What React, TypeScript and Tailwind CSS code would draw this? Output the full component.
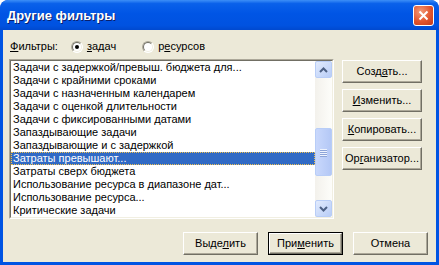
import React from "react";

const items = [
  "Задачи с задержкой/превыш. бюджета для...",
  "Задачи с крайними сроками",
  "Задачи с назначенным календарем",
  "Задачи с оценкой длительности",
  "Задачи с фиксированными датами",
  "Запаздывающие задачи",
  "Запаздывающие и с задержкой",
  "Затраты превышают...",
  "Затраты сверх бюджета",
  "Использование ресурса в диапазоне дат...",
  "Использование ресурса...",
  "Критические задачи",
];

const font = "font-['Liberation_Sans',Arial,sans-serif]";

function Btn({
  children,
  def,
  w = "w-[75px]",
}: {
  children: React.ReactNode;
  def?: boolean;
  w?: string;
}) {
  return (
    <div
      className={`${w} h-[23px] ${def ? "border border-black" : ""} bg-[#ece9d8]`}
    >
      <div
        className={`w-full h-full flex items-center justify-center border border-t-white border-l-white border-r-[#716f64] border-b-[#716f64] shadow-[inset_-1px_-1px_0_#aca899] text-[11px] text-black`}
      >
        {children}
      </div>
    </div>
  );
}

function Radio({ on }: { on?: boolean }) {
  return (
    <span className="w-[12px] h-[12px] rounded-full bg-white border border-t-[#aca899] border-l-[#aca899] border-r-white border-b-white flex items-center justify-center">
      <span className="w-[10px] h-[10px] rounded-full border border-t-[#716f64] border-l-[#716f64] border-r-[#f1efe2] border-b-[#f1efe2] flex items-center justify-center">
        {on && <span className="w-[4px] h-[4px] rounded-full bg-black" />}
      </span>
    </span>
  );
}

function Arrow({ up }: { up?: boolean }) {
  return (
    <div className="w-[17px] h-[17px] rounded-[2px] border border-[#b8cdf7] bg-gradient-to-br from-[#e2ebfd] to-[#b8cdf7] flex items-center justify-center">
      <svg width="9" height="6" viewBox="0 0 9 6">
        <path
          d={up ? "M1 5 L4.5 1.5 L8 5" : "M1 1 L4.5 4.5 L8 1"}
          fill="none"
          stroke="#4d6185"
          strokeWidth="2"
        />
      </svg>
    </div>
  );
}

export default function App() {
  return (
    <div className={`w-[439px] h-[265px] ${font} bg-[#0054e3] rounded-t-[8px] flex flex-col overflow-hidden`}>
      <div className="h-[30px] shrink-0 flex items-center justify-between pl-[7px] pr-[5px] rounded-t-[8px] bg-[linear-gradient(#3d8ff7_0%,#0a61ea_12%,#0055e5_45%,#0052e0_85%,#0049cf_100%)]">
        <span className="text-white font-bold text-[13px] [text-shadow:1px_1px_#0a1e6a] pt-[1px]">
          Другие фильтры
        </span>
        <div className="w-[21px] h-[21px] rounded-[3px] border border-white bg-[radial-gradient(circle_at_35%_30%,#f29a78,#e2552e_55%,#c2391a)] flex items-center justify-center">
          <svg width="11" height="11" viewBox="0 0 11 11">
            <path d="M1.5 1.5 L9.5 9.5 M9.5 1.5 L1.5 9.5" stroke="white" strokeWidth="2" />
          </svg>
        </div>
      </div>

      <div className="flex-1 mx-[3px] mb-[3px] bg-[#ece9d8] flex flex-col text-[11px] text-black">
        <div className="h-[13px] mt-[10px] flex items-center pl-[7px]">
          <span>
            <span className="underline">Ф</span>ильтры:
          </span>
          <span className="ml-[13px]"><Radio on /></span>
          <span className="ml-[4px]">
            <span className="underline">з</span>адач
          </span>
          <span className="ml-[26px]"><Radio /></span>
          <span className="ml-[4px]">
            р<span className="underline">е</span>сурсов
          </span>
        </div>

        <div className="flex mt-[6px] pl-[6px]">
          <div className="w-[325px] h-[160px] border border-t-[#aca899] border-l-[#aca899] border-r-white border-b-white">
            <div className="w-full h-full border border-t-[#716f64] border-l-[#716f64] border-r-[#f1efe2] border-b-[#f1efe2] bg-white flex">
              <div className="flex-1 flex flex-col">
                {items.map((t, i) =>
                  i === 7 ? (
                    <div
                      key={t}
                      className="h-[13px] leading-[11px] pl-[1px] bg-[#316ac5] text-white border border-dotted border-[#f0c050]"
                    >
                      {t}
                    </div>
                  ) : (
                    <div key={t} className="h-[13px] leading-[13px] pl-[2px] whitespace-nowrap">
                      {t}
                    </div>
                  )
                )}
              </div>
              <div className="w-[17px] flex flex-col bg-[linear-gradient(90deg,#f3f1ec,#fdfdfa)]">
                <Arrow up />
                <div className="flex-1">
                  <div className="mt-[50px] h-[48px] rounded-[2px] border border-[#b8cdf7] bg-gradient-to-r from-[#c9d8fc] to-[#b4c8f6] flex flex-col items-center justify-center gap-[1px]">
                    {[0, 1, 2, 3].map((k) => (
                      <span key={k} className="w-[7px] h-[1px] bg-[#eef3fe] shadow-[0_1px_0_#8da4d8]" />
                    ))}
                  </div>
                </div>
                <Arrow />
              </div>
            </div>
          </div>

          <div className="ml-[8px] mt-[1px] flex flex-col gap-[6px]">
            <Btn w="w-[80px]">
              <span>Созд<span className="underline">а</span>ть...</span>
            </Btn>
            <Btn w="w-[80px]">
              <span><span className="underline">И</span>зменить...</span>
            </Btn>
            <Btn w="w-[80px]">
              <span><span className="underline">К</span>опировать...</span>
            </Btn>
            <Btn w="w-[80px]">
              <span>Ор<span className="underline">г</span>анизатор...</span>
            </Btn>
          </div>
        </div>

        <div className="flex justify-end gap-[10px] pr-[8px] mt-[13px]">
          <Btn>
            <span>Выде<span className="underline">л</span>ить</span>
          </Btn>
          <Btn def>
            <span>При<span className="underline">м</span>енить</span>
          </Btn>
          <Btn>
            <span>Отмена</span>
          </Btn>
        </div>
      </div>
    </div>
  );
}
